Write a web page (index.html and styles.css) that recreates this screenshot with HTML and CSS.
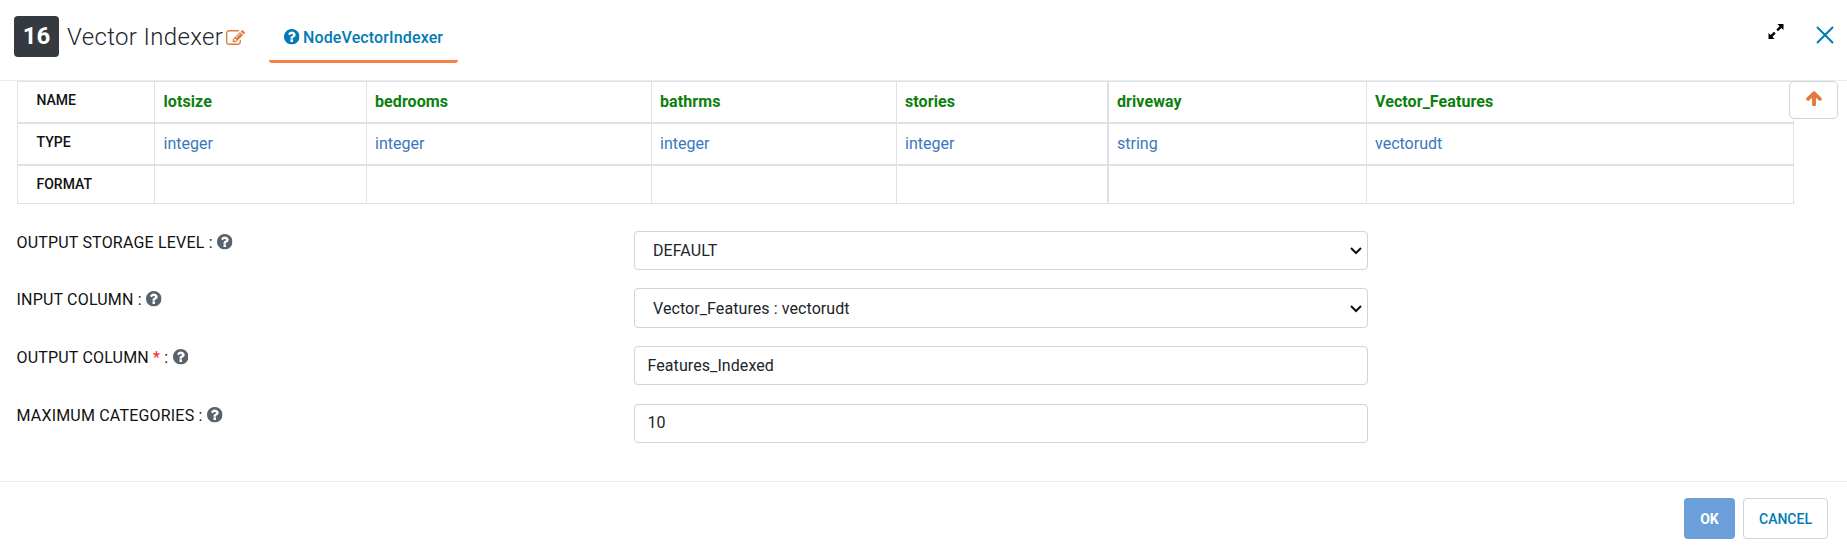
FILE: index.html
```html
<!DOCTYPE html>
<html lang="en">
<head>
<meta charset="utf-8">
<title>Vector Indexer</title>
<link rel="stylesheet" href="styles.css">
</head>
<body>
<svg class="defs" aria-hidden="true">
  <symbol id="help" viewBox="128 128 1536 1536"><path fill="currentColor" d="M1024 1376v-192q0-14-9-23t-23-9h-192q-14 0-23 9t-9 23v192q0 14 9 23t23 9h192q14 0 23-9t9-23zm256-672q0-88-55.5-163t-138.5-116-170-41q-243 0-371 213-15 24 8 42l132 100q7 6 19 6 16 0 25-12 53-68 86-92 34-24 86-24 48 0 85.5 26t37.5 59q0 38-20 61t-68 45q-63 28-115.5 86.5t-52.5 125.5v36q0 14 9 23t23 9h192q14 0 23-9t9-23q0-19 21.5-49.5t54.5-49.5q32-18 49-28.5t46-35 44.5-48 28-60.5 12.5-81zm384 192q0 209-103 385.5t-279.5 279.5-385.5 103-385.5-103-279.5-279.5-103-385.5 103-385.5 279.5-279.5 385.5-103 385.5 103 279.5 279.5 103 385.5z"/></symbol>
</svg>
<header class="header">
  <span class="badge">16</span>
  <h1 class="title">Vector Indexer</h1>
  <svg class="edit" viewBox="0 128 1792 1408"><path fill="currentColor" d="M888 1184l116-116-152-152-116 116v56h96v96h56zm440-720q-16-16-33 1l-350 350q-17 17-1 33t33-1l350-350q17-17 1-33zm80 594v190q0 119-84.5 203.5t-203.5 84.5h-832q-119 0-203.5-84.5t-84.5-203.5v-832q0-119 84.5-203.5t203.5-84.5h832q63 0 117 25 15 7 18 23 3 17-9 29l-49 49q-14 14-32 8-23-6-45-6h-832q-66 0-113 47t-47 113v832q0 66 47 113t113 47h832q66 0 113-47t47-113v-126q0-13 9-22l64-64q15-15 35-7t20 29zm-96-738l288 288-672 672h-288v-288zm444 132l-92 92-288-288 92-92q28-28 68-28t68 28l152 152q28 28 28 68t-28 68z"/></svg>
  <a class="tab"><svg class="help"><use href="#help"/></svg><span>NodeVectorIndexer</span></a>
  <svg class="expand" viewBox="0 0 16 16"><path d="M9.5 0H16v6.5L13.7 4.2 10.2 7.7 8.3 5.8 11.8 2.3zM6.5 16H0V9.5l2.3 2.3 3.5-3.5 1.9 1.9-3.5 3.5z"/></svg>
  <svg class="close" viewBox="0 0 18 18"><path d="M1 1l16 16M17 1L1 17"/></svg>
</header>
<main class="main">
  <div class="schema">
    <div class="row names"><b>NAME</b><span>lotsize</span><span>bedrooms</span><span>bathrms</span><span>stories</span><span>driveway</span><span>Vector_Features</span></div>
    <div class="row types"><b>TYPE</b><span>integer</span><span>integer</span><span>integer</span><span>integer</span><span>string</span><span>vectorudt</span></div>
    <div class="row formats"><b>FORMAT</b><span></span><span></span><span></span><span></span><span></span><span></span></div>
  </div>
  <button class="up"><svg viewBox="117 192 1558 1472"><path fill="currentColor" d="M1675 971q0 51-37 90l-75 75q-38 38-91 38-54 0-90-38l-294-293v704q0 52-37.5 84.5t-90.5 32.5h-128q-53 0-90.5-32.5t-37.5-84.5v-704l-294 293q-36 38-90 38t-90-38l-75-75q-38-38-38-90 0-53 38-91l651-651q35-37 90-37 54 0 91 37l651 651q37 39 37 91z"/></svg></button>
  <div class="form">
    <div class="field"><label><span>OUTPUT STORAGE LEVEL :</span><svg class="help"><use href="#help"/></svg></label>
      <div class="control select"><span>DEFAULT</span><svg class="chevron" viewBox="0 0 12 8"><path d="M1 1l5 5 5-5"/></svg></div></div>
    <div class="field tall"><label><span>INPUT COLUMN :</span><svg class="help"><use href="#help"/></svg></label>
      <div class="control select"><span>Vector_Features : vectorudt</span><svg class="chevron" viewBox="0 0 12 8"><path d="M1 1l5 5 5-5"/></svg></div></div>
    <div class="field"><label><span>OUTPUT COLUMN <i>*</i> :</span><svg class="help"><use href="#help"/></svg></label>
      <div class="control output"><span>Features_Indexed</span></div></div>
    <div class="field"><label><span>MAXIMUM CATEGORIES :</span><svg class="help"><use href="#help"/></svg></label>
      <div class="control"><span>10</span></div></div>
  </div>
</main>
<footer class="footer"><button class="ok">OK</button><button class="cancel">CANCEL</button></footer>
</body>
</html>
```
FILE: styles.css
```css
* { box-sizing: border-box; }
body { margin: 0; height: 551px; display: flex; flex-direction: column; overflow: hidden; background: #fff; color: #212529; font-family: Roboto, sans-serif; font-size: 16px; }
svg { display: block; flex: none; }
button { font: inherit; padding: 0; background: #fff; border: 1px solid #ced4da; border-radius: 4px; }
.defs { position: absolute; width: 0; height: 0; }
.header { display: flex; align-items: flex-start; height: 81px; flex: none; padding-left: 14px; border-bottom: 1px solid #e9ecef; }
.badge { width: 45px; height: 41px; margin-top: 16px; border-radius: 4px; background: #343a40; color: #fff; font-size: 24px; font-weight: 700; line-height: 41px; text-align: center; }
.title { width: 158px; margin: 23px 0 0 8px; font-size: 24px; font-weight: 300; line-height: 29px; letter-spacing: .35px; white-space: nowrap; }
.edit { width: 19px; height: 15px; margin: 30px 0 0 .5px; color: #e07b42; }
.tab { display: flex; width: 189px; height: 43px; margin: 20px 0 0 24.5px; padding: 8px 0 0 15px; border-bottom: 3px solid #f58142; border-radius: 3px; color: #007bb6; font-weight: 500; line-height: 19px; letter-spacing: .13px; }
.help { width: 15.5px; height: 15.5px; color: #59636d; }
.tab .help { margin: 1px 3.5px 0 0; color: #007bb6; }
.expand { width: 16px; height: 15px; margin: 24px 0 0 auto; }
.close { width: 18px; height: 18px; margin: 26px 13px 0 32px; fill: none; stroke: #007bb0; stroke-width: 2; }
.main { height: 400px; flex: none; display: grid; grid-template-columns: 1776px 50px; grid-template-rows: 123px 1fr; padding-left: 17px; }
.schema { width: 1777px; border: 1px solid #dee2e6; display: flex; flex-direction: column; }
.row { display: grid; grid-template-columns: 137px 212px 285px 245px 212px 258px 1fr; height: 42px; border-bottom: 2px solid #dee2e6; line-height: 19px; }
.row.formats { height: 37px; border: 0; }
.row > * { padding: 10px 0 0 8px; border-left: 1px solid #dee2e6; }
.row > :first-child { padding: 9px 0 0 18.5px; border: 0; font-size: 14px; font-weight: 500; color: #111; }
.row > :nth-child(n+2) { margin-left: -1px; }
.row > :nth-child(2) { padding-left: 8.5px; }
.row > :nth-child(6) { margin-left: -2px; border-left-width: 2px; }
.names span { color: #0b800b; font-weight: 700; letter-spacing: .08px; }
.types span { color: #3878bd; }
.up { position: relative; z-index: 1; display: flex; align-items: center; justify-content: center; width: 49px; height: 38px; margin-left: -4px; color: #e07b42; border-radius: 5px; }
.up svg { width: 16px; height: 15px; margin-top: -3px; }
.form { display: flex; flex-direction: column; gap: 19px; padding-top: 27px; width: 1351px; }
.field { display: grid; grid-template-columns: 617px 734px; height: 39px; }
.field.tall { height: 40px; margin: -1px 0; }
.field label { display: flex; gap: 4.5px; margin-left: -.5px; padding-top: 2px; line-height: 19px; color: #111; letter-spacing: .19px; }
.field label i { font-style: normal; color: #f22; }
.field .help { margin-top: 1px; }
.control { display: flex; align-items: center; justify-content: space-between; padding: 0 6px 2px 12.5px; border: 1px solid #ced4da; border-radius: 4px; letter-spacing: .08px; }
.control.output { padding-bottom: 0; }
.control.select { padding: 0 5px 0 18px; }
.tall .control.select { padding-top: 1px; }
.chevron { width: 12px; height: 8px; fill: none; stroke: #111; stroke-width: 2; }
.footer { flex: none; display: flex; justify-content: flex-end; gap: 8px; height: 70px; padding: 16px 19px 0 0; border-top: 1px solid #e9ecef; font-size: 14px; font-weight: 500; }
.ok, .cancel { height: 41px; }
.ok { width: 51px; border: 0; background: #6a9fd9; color: #fff; font-weight: 700; }
.cancel { width: 85px; color: #007bb6; }
```
